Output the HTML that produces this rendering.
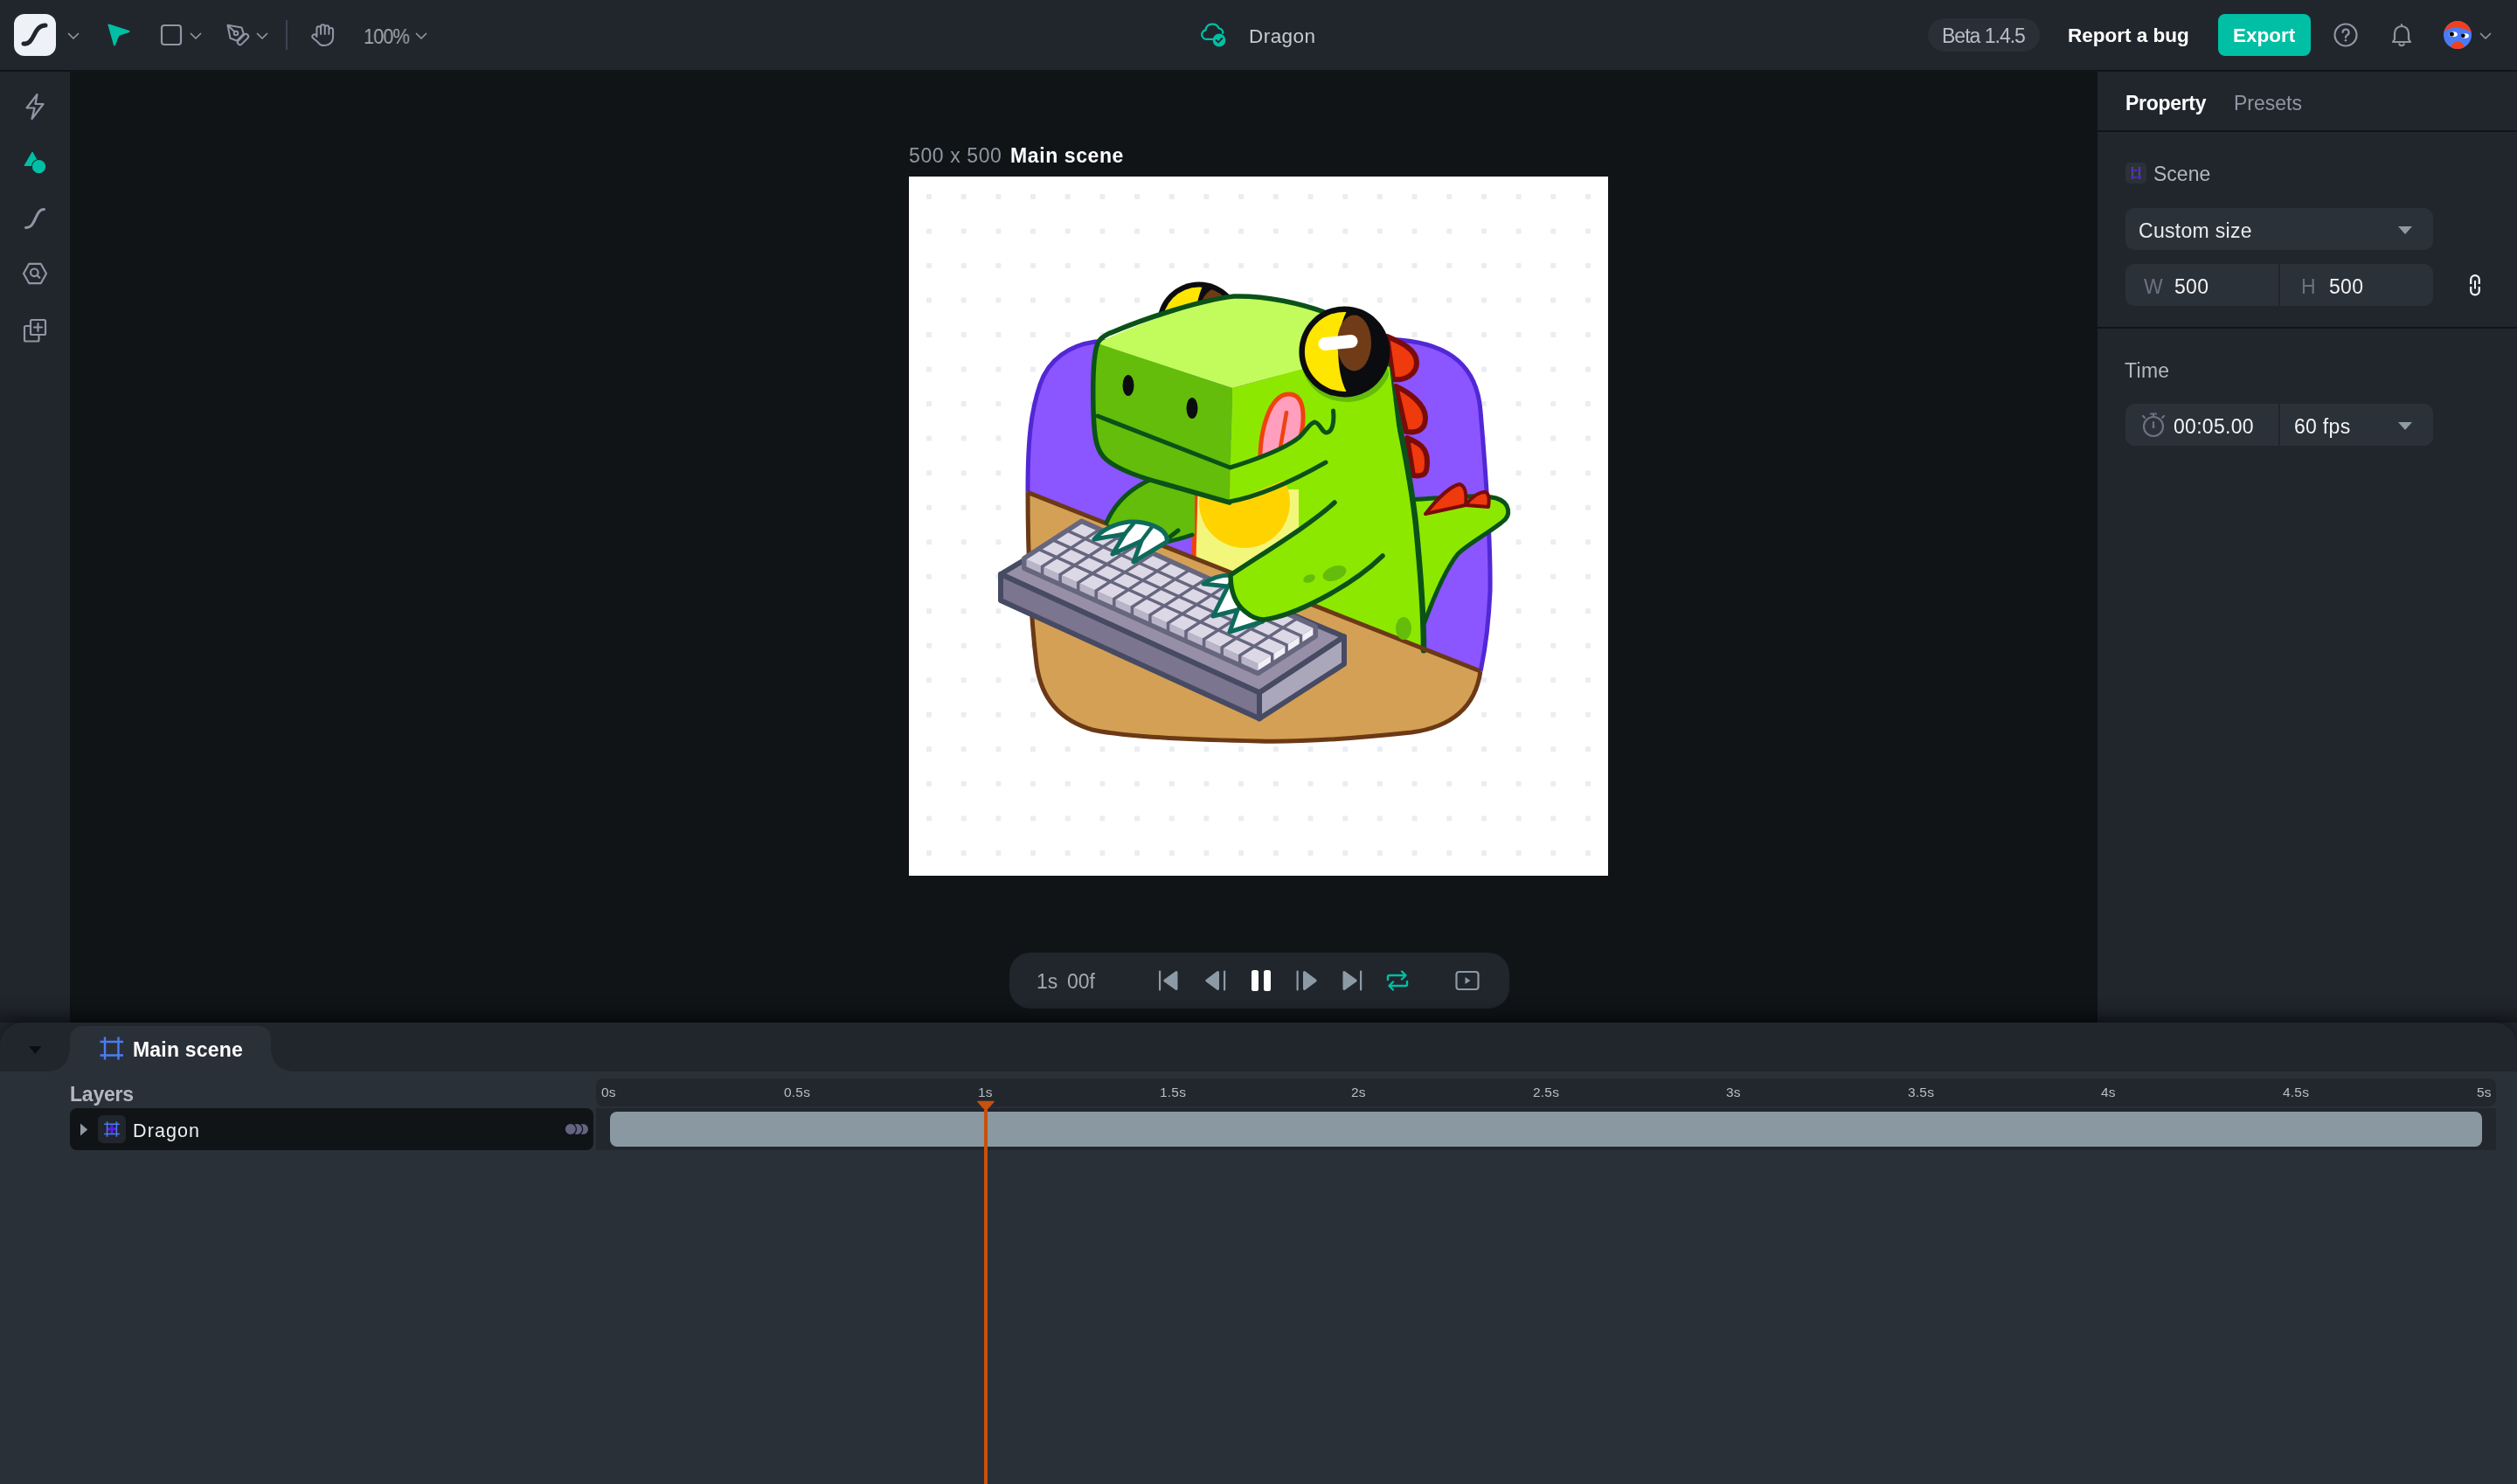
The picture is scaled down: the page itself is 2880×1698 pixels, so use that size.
<!DOCTYPE html>
<html><head><meta charset="utf-8">
<style>
*{margin:0;padding:0;box-sizing:border-box}
html,body{width:2880px;height:1698px;overflow:hidden;background:#111417;font-family:"Liberation Sans",sans-serif}
.a{position:absolute}
.t{position:absolute;white-space:nowrap;line-height:1;will-change:transform}
svg{position:absolute;overflow:visible}
</style></head><body>
<div class="a" style="left:0px;top:0px;width:2880px;height:80px;background:#21262d;border-radius:0px;"></div>
<div class="a" style="left:16px;top:16px;width:48px;height:48px;background:#eef1f5;border-radius:12px;"></div>
<svg style="left:16px;top:16px" width="48" height="48" viewBox="0 0 48 48"><path d="M11 34 C17 35 20 30 23 24 C26 18 29 13 36 13" fill="none" stroke="#21262d" stroke-width="5" stroke-linecap="round"/></svg>
<svg style="left:77px;top:37px" width="14" height="9" viewBox="0 0 14 9"><path d="M1.5 1.5 L7 7 L12.5 1.5" fill="none" stroke="#8f96a3" stroke-width="1.7" stroke-linecap="round" stroke-linejoin="round"/></svg>
<svg style="left:122px;top:26px" width="28" height="28" viewBox="0 0 28 28"><path d="M2.5 2.5 L25.5 10 L13.5 14 L9 25.5 Z" fill="#00bfa5" stroke="#00bfa5" stroke-width="2" stroke-linejoin="round"/></svg>
<svg style="left:182px;top:26px" width="28" height="28" viewBox="0 0 28 28"><rect x="3" y="3" width="22" height="22" rx="3" fill="none" stroke="#8f96a3" stroke-width="2.2"/></svg>
<svg style="left:217px;top:37px" width="14" height="9" viewBox="0 0 14 9"><path d="M1.5 1.5 L7 7 L12.5 1.5" fill="none" stroke="#8f96a3" stroke-width="1.7" stroke-linecap="round" stroke-linejoin="round"/></svg>
<svg style="left:258px;top:26px" width="30" height="30" viewBox="0 0 30 30"><g fill="none" stroke="#8f96a3" stroke-width="2" stroke-linejoin="round" stroke-linecap="round"><path d="M2.5 2.8 L18.5 5.6 L20.8 12.6 L13 20.6 L5.5 17.8 Z"/><circle cx="12" cy="12" r="2.3"/><path d="M3.2 3.5 L10.3 10.3"/><rect x="12.5" y="16.3" width="15" height="5.6" rx="2.8" transform="rotate(-45 20 19.1)"/></g></svg>
<svg style="left:293px;top:37px" width="14" height="9" viewBox="0 0 14 9"><path d="M1.5 1.5 L7 7 L12.5 1.5" fill="none" stroke="#8f96a3" stroke-width="1.7" stroke-linecap="round" stroke-linejoin="round"/></svg>
<div class="a" style="left:327px;top:23px;width:2px;height:34px;background:#3d4350;border-radius:0px;"></div>
<svg style="left:356px;top:27px" width="30" height="30" viewBox="0 0 30 30"><path d="M8 17 V7 a2.5 2.5 0 0 1 5 0 V14 V5 a2.5 2.5 0 0 1 5 0 V14 V6 a2.5 2.5 0 0 1 5 0 V14 V9 a2.5 2.5 0 0 1 5 0 V18 a10 10 0 0 1 -10 10 h-1 a9 9 0 0 1 -7.5 -4 L3 18.5 a2.6 2.6 0 0 1 4 -3.3 L8 17" fill="none" stroke="#8f96a3" stroke-width="2.2" stroke-linejoin="round" stroke-linecap="round" transform="translate(-1,-1) scale(0.93)"/></svg>
<div class="t" style="left:415.7px;top:31.0px;font-size:23px;color:#a3a8b2;letter-spacing:-1.0px;transform:scaleX(0.95);transform-origin:0 0;">100%</div>
<svg style="left:475px;top:37px" width="14" height="9" viewBox="0 0 14 9"><path d="M1.5 1.5 L7 7 L12.5 1.5" fill="none" stroke="#8f96a3" stroke-width="1.7" stroke-linecap="round" stroke-linejoin="round"/></svg>
<svg style="left:1373px;top:26px" width="32" height="30" viewBox="0 0 32 30"><path d="M16 18.8 H7.3 a5.2 5.2 0 0 1 -0.9 -10.3 a8 8 0 0 1 15.2 -2.2 a5 5 0 0 1 4.6 5.6" fill="none" stroke="#00bfa5" stroke-width="2.3" stroke-linecap="round" stroke-linejoin="round"/><circle cx="22" cy="20" r="7.4" fill="#00bfa5"/><path d="M18.6 20 l2.4 2.4 l4.2 -4.4" fill="none" stroke="#21262d" stroke-width="2" stroke-linecap="round" stroke-linejoin="round"/></svg>
<div class="t" style="left:1429.2px;top:30.7px;font-size:22.5px;color:#c8cad2;letter-spacing:0.45px;">Dragon</div>
<div class="a" style="left:2206px;top:21px;width:128px;height:38px;background:#2a2f37;border-radius:19px;"></div>
<div class="t" style="left:2222.2px;top:30.4px;font-size:23px;color:#b9bdc5;letter-spacing:-1px;">Beta 1.4.5</div>
<div class="t" style="left:2365.7px;top:30.4px;font-size:22.5px;color:#ffffff;font-weight:bold;">Report a bug</div>
<div class="a" style="left:2538px;top:16px;width:106px;height:48px;background:#00bfa5;border-radius:8px;"></div>
<div class="t" style="left:2554.7px;top:30.4px;font-size:22.5px;color:#ffffff;font-weight:bold;">Export</div>
<svg style="left:2668px;top:24px" width="32" height="32" viewBox="0 0 32 32"><circle cx="16" cy="16" r="12.5" fill="none" stroke="#8f96a3" stroke-width="2.2"/><path d="M12.6 13 a3.5 3.5 0 1 1 5 3.2 c-1 .5 -1.6 1.2 -1.6 2.3 v.6" fill="none" stroke="#8f96a3" stroke-width="2.2" stroke-linecap="round"/><circle cx="16" cy="22.3" r="1.3" fill="#8f96a3"/></svg>
<svg style="left:2732px;top:24px" width="32" height="32" viewBox="0 0 32 32"><path d="M8 21 V14 a8 8 0 0 1 16 0 V21 l2 3 H6 Z" fill="none" stroke="#8f96a3" stroke-width="2.2" stroke-linejoin="round"/><path d="M13.2 25.5 a2.8 2.8 0 0 0 5.6 0" fill="none" stroke="#8f96a3" stroke-width="2"/><path d="M16 4 v2" stroke="#8f96a3" stroke-width="2.2" stroke-linecap="round"/></svg>
<svg style="left:2796px;top:24px" width="32" height="32" viewBox="0 0 32 32"><defs><clipPath id="av"><circle cx="16" cy="16" r="16"/></clipPath></defs><g clip-path="url(#av)"><rect width="32" height="32" fill="#4a7bf7"/><path d="M-1 -1 H33 V13.5 C28 10, 18 6.5, 10 8 C5 9, 1 11, -1 13.5 Z" fill="#f0401e"/><ellipse cx="16" cy="32" rx="8" ry="8.5" fill="#f0401e"/><ellipse cx="11" cy="15.2" rx="4.8" ry="2.9" fill="#fff"/><ellipse cx="24.5" cy="17" rx="4.4" ry="2.7" fill="#fff"/><circle cx="9.3" cy="15" r="2.6" fill="#0a0a0a"/><circle cx="22.3" cy="16.8" r="2.4" fill="#0a0a0a"/></g></svg>
<svg style="left:2837px;top:37px" width="14" height="9" viewBox="0 0 14 9"><path d="M1.5 1.5 L7 7 L12.5 1.5" fill="none" stroke="#8f96a3" stroke-width="1.7" stroke-linecap="round" stroke-linejoin="round"/></svg>
<div class="a" style="left:0px;top:80px;width:2880px;height:2px;background:#111417;border-radius:0px;"></div>
<div class="a" style="left:0px;top:82px;width:80px;height:1140px;background:#21262d;border-radius:0px;"></div>
<svg style="left:26px;top:106px" width="28" height="32" viewBox="0 0 28 32"><path d="M16.5 2 L4.5 17.5 H13.5 L10.5 30 L23.5 13 H14.5 Z" fill="none" stroke="#8f96a3" stroke-width="2.2" stroke-linejoin="round"/></svg>
<svg style="left:26px;top:172px" width="30" height="30" viewBox="0 0 30 30"><path d="M2 17.5 L11 2 L19.8 17.5 Z" fill="#00bfa5" stroke="#00bfa5" stroke-width="1" stroke-linejoin="round"/><circle cx="18.5" cy="18.7" r="8.6" fill="#21262d"/><circle cx="18.5" cy="18.7" r="7.6" fill="#00bfa5"/></svg>
<svg style="left:26px;top:236px" width="28" height="28" viewBox="0 0 28 28"><path d="M3.5 24.5 C10 25 12 19 14.5 14 C17 8.5 19 3.5 24.5 3.5" fill="none" stroke="#8f96a3" stroke-width="3" stroke-linecap="round"/></svg>
<svg style="left:24px;top:299px" width="32" height="30" viewBox="0 0 32 30"><path d="M9.3 2.8 H22.7 L29 14 L22.7 25.2 H9.3 L3 14 Z" fill="none" stroke="#8f96a3" stroke-width="2.2" stroke-linejoin="round"/><circle cx="15.3" cy="12.8" r="4.3" fill="none" stroke="#8f96a3" stroke-width="2.2"/><path d="M18.5 16 L21.3 18.8" stroke="#8f96a3" stroke-width="2.2" stroke-linecap="round"/></svg>
<svg style="left:25px;top:363px" width="30" height="30" viewBox="0 0 30 30"><g fill="none" stroke="#8f96a3" stroke-width="2.2" stroke-linejoin="round"><path d="M9 10 H4.5 a1.5 1.5 0 0 0 -1.5 1.5 V26 a1.5 1.5 0 0 0 1.5 1.5 H18 a1.5 1.5 0 0 0 1.5 -1.5 V21"/><rect x="10" y="3" width="17" height="17" rx="1.5"/><path d="M18.5 7 V16 M14 11.5 H23" stroke-linecap="round"/></g></svg>
<div class="a" style="left:2400px;top:82px;width:480px;height:1140px;background:#21262d;border-radius:0px;"></div>
<div class="t" style="left:2431.7px;top:106.7px;font-size:23px;color:#ffffff;font-weight:bold;letter-spacing:-0.3px;">Property</div>
<div class="t" style="left:2555.7px;top:107.2px;font-size:23px;color:#9097a2;">Presets</div>
<div class="a" style="left:2400px;top:149px;width:480px;height:2px;background:#111417;border-radius:0px;"></div>
<div class="a" style="left:2432px;top:186px;width:24px;height:24px;background:#2b3139;border-radius:5px;"></div>
<svg style="left:2432px;top:186px" width="24" height="24" viewBox="0 0 24 24"><g fill="#4b4e62"><rect x="7" y="5" width="2" height="14"/><rect x="15" y="5" width="2" height="14"/></g><g fill="#5a1ee8"><rect x="6.5" y="7" width="3" height="3"/><rect x="14.5" y="7" width="3" height="3"/><rect x="6.5" y="15" width="3" height="3"/><rect x="14.5" y="15" width="3" height="3"/><circle cx="13" cy="9" r="0.9"/><circle cx="13" cy="17" r="0.9"/></g><g fill="#6c6f80"><circle cx="11" cy="9" r="0.7"/><circle cx="11" cy="17" r="0.7"/></g></svg>
<div class="t" style="left:2463.7px;top:188.4px;font-size:23px;color:#b3b7bf;">Scene</div>
<div class="a" style="left:2432px;top:238px;width:352px;height:48px;background:#2b3139;border-radius:10px;"></div>
<div class="t" style="left:2447.3px;top:253.1px;font-size:23px;color:#e9ebef;letter-spacing:0.3px;">Custom size</div>
<svg style="left:2744px;top:259px" width="16" height="10" viewBox="0 0 16 10"><path d="M0 0 H16 L8 9 Z" fill="#8e9ba5"/></svg>
<div class="a" style="left:2432px;top:302px;width:352px;height:48px;background:#2b3139;border-radius:10px;"></div>
<div class="a" style="left:2607px;top:302px;width:2px;height:48px;background:#21262d;border-radius:0px;"></div>
<div class="t" style="left:2452.5px;top:317.4px;font-size:23px;color:#6c7180;">W</div>
<div class="t" style="left:2487.7px;top:317.4px;font-size:23px;color:#f2f3f5;letter-spacing:0.3px;">500</div>
<div class="t" style="left:2632.7px;top:317.4px;font-size:23px;color:#6c7180;">H</div>
<div class="t" style="left:2664.7px;top:317.4px;font-size:23px;color:#f2f3f5;letter-spacing:0.3px;">500</div>
<svg style="left:2822px;top:310px" width="20" height="32" viewBox="0 0 20 32"><g fill="none" stroke="#f3f1f7" stroke-width="2.3" stroke-linecap="butt"><path d="M5.2 15 V10 a4.8 4.8 0 0 1 9.6 0 V15"/><path d="M5.2 18 V22.5 a4.8 4.8 0 0 0 9.6 0 V18"/></g><rect x="9" y="11" width="2" height="9.5" fill="#f3f1f7"/></svg>
<div class="a" style="left:2400px;top:374px;width:480px;height:2px;background:#111417;border-radius:0px;"></div>
<div class="t" style="left:2430.7px;top:413.1px;font-size:23px;color:#b3b7bf;letter-spacing:0.3px;">Time</div>
<div class="a" style="left:2432px;top:462px;width:352px;height:48px;background:#2b3139;border-radius:10px;"></div>
<div class="a" style="left:2607px;top:462px;width:2px;height:48px;background:#21262d;border-radius:0px;"></div>
<svg style="left:2449px;top:470px" width="30" height="32" viewBox="0 0 30 32"><g fill="none" stroke="#6c7180" stroke-width="2.2" stroke-linecap="round"><circle cx="15" cy="18" r="11"/><path d="M12 3.5 H18 M15 3.5 V7 M25 8 L27 6 M5 8 L3 6"/><path d="M15 13 V18"/></g><circle cx="15" cy="18.5" r="1.6" fill="#6c7180"/></svg>
<div class="t" style="left:2486.7px;top:477.1px;font-size:23px;color:#f2f3f5;letter-spacing:0.3px;">00:05.00</div>
<div class="t" style="left:2625.3px;top:477.1px;font-size:23px;color:#f2f3f5;letter-spacing:0.3px;">60 fps</div>
<svg style="left:2744px;top:483px" width="16" height="10" viewBox="0 0 16 10"><path d="M0 0 H16 L8 9 Z" fill="#8e9ba5"/></svg>
<div class="t" style="left:1039.7px;top:166.9px;font-size:23px;color:#8f96a0;letter-spacing:0.6px;">500 x 500</div>
<div class="t" style="left:1156.0px;top:166.9px;font-size:23px;color:#ffffff;font-weight:bold;letter-spacing:0.6px;">Main scene</div>
<div class="a" style="left:1040px;top:202px;width:800px;height:800px;background:#ffffff;border-radius:0px;"></div>
<svg style="left:1040px;top:202px" width="800" height="800" viewBox="0 0 800 800"><g fill="#e9eef3"><rect x="20.0" y="20.0" width="6" height="6" rx="1.2"/><rect x="20.0" y="59.5" width="6" height="6" rx="1.2"/><rect x="20.0" y="99.0" width="6" height="6" rx="1.2"/><rect x="20.0" y="138.6" width="6" height="6" rx="1.2"/><rect x="20.0" y="178.1" width="6" height="6" rx="1.2"/><rect x="20.0" y="217.6" width="6" height="6" rx="1.2"/><rect x="20.0" y="257.1" width="6" height="6" rx="1.2"/><rect x="20.0" y="296.6" width="6" height="6" rx="1.2"/><rect x="20.0" y="336.2" width="6" height="6" rx="1.2"/><rect x="20.0" y="375.7" width="6" height="6" rx="1.2"/><rect x="20.0" y="415.2" width="6" height="6" rx="1.2"/><rect x="20.0" y="454.7" width="6" height="6" rx="1.2"/><rect x="20.0" y="494.2" width="6" height="6" rx="1.2"/><rect x="20.0" y="533.8" width="6" height="6" rx="1.2"/><rect x="20.0" y="573.3" width="6" height="6" rx="1.2"/><rect x="20.0" y="612.8" width="6" height="6" rx="1.2"/><rect x="20.0" y="652.3" width="6" height="6" rx="1.2"/><rect x="20.0" y="691.8" width="6" height="6" rx="1.2"/><rect x="20.0" y="731.4" width="6" height="6" rx="1.2"/><rect x="20.0" y="770.9" width="6" height="6" rx="1.2"/><rect x="59.7" y="20.0" width="6" height="6" rx="1.2"/><rect x="59.7" y="59.5" width="6" height="6" rx="1.2"/><rect x="59.7" y="99.0" width="6" height="6" rx="1.2"/><rect x="59.7" y="138.6" width="6" height="6" rx="1.2"/><rect x="59.7" y="178.1" width="6" height="6" rx="1.2"/><rect x="59.7" y="217.6" width="6" height="6" rx="1.2"/><rect x="59.7" y="257.1" width="6" height="6" rx="1.2"/><rect x="59.7" y="296.6" width="6" height="6" rx="1.2"/><rect x="59.7" y="336.2" width="6" height="6" rx="1.2"/><rect x="59.7" y="375.7" width="6" height="6" rx="1.2"/><rect x="59.7" y="415.2" width="6" height="6" rx="1.2"/><rect x="59.7" y="454.7" width="6" height="6" rx="1.2"/><rect x="59.7" y="494.2" width="6" height="6" rx="1.2"/><rect x="59.7" y="533.8" width="6" height="6" rx="1.2"/><rect x="59.7" y="573.3" width="6" height="6" rx="1.2"/><rect x="59.7" y="612.8" width="6" height="6" rx="1.2"/><rect x="59.7" y="652.3" width="6" height="6" rx="1.2"/><rect x="59.7" y="691.8" width="6" height="6" rx="1.2"/><rect x="59.7" y="731.4" width="6" height="6" rx="1.2"/><rect x="59.7" y="770.9" width="6" height="6" rx="1.2"/><rect x="99.4" y="20.0" width="6" height="6" rx="1.2"/><rect x="99.4" y="59.5" width="6" height="6" rx="1.2"/><rect x="99.4" y="99.0" width="6" height="6" rx="1.2"/><rect x="99.4" y="138.6" width="6" height="6" rx="1.2"/><rect x="99.4" y="178.1" width="6" height="6" rx="1.2"/><rect x="99.4" y="217.6" width="6" height="6" rx="1.2"/><rect x="99.4" y="257.1" width="6" height="6" rx="1.2"/><rect x="99.4" y="296.6" width="6" height="6" rx="1.2"/><rect x="99.4" y="336.2" width="6" height="6" rx="1.2"/><rect x="99.4" y="375.7" width="6" height="6" rx="1.2"/><rect x="99.4" y="415.2" width="6" height="6" rx="1.2"/><rect x="99.4" y="454.7" width="6" height="6" rx="1.2"/><rect x="99.4" y="494.2" width="6" height="6" rx="1.2"/><rect x="99.4" y="533.8" width="6" height="6" rx="1.2"/><rect x="99.4" y="573.3" width="6" height="6" rx="1.2"/><rect x="99.4" y="612.8" width="6" height="6" rx="1.2"/><rect x="99.4" y="652.3" width="6" height="6" rx="1.2"/><rect x="99.4" y="691.8" width="6" height="6" rx="1.2"/><rect x="99.4" y="731.4" width="6" height="6" rx="1.2"/><rect x="99.4" y="770.9" width="6" height="6" rx="1.2"/><rect x="139.0" y="20.0" width="6" height="6" rx="1.2"/><rect x="139.0" y="59.5" width="6" height="6" rx="1.2"/><rect x="139.0" y="99.0" width="6" height="6" rx="1.2"/><rect x="139.0" y="138.6" width="6" height="6" rx="1.2"/><rect x="139.0" y="178.1" width="6" height="6" rx="1.2"/><rect x="139.0" y="217.6" width="6" height="6" rx="1.2"/><rect x="139.0" y="257.1" width="6" height="6" rx="1.2"/><rect x="139.0" y="296.6" width="6" height="6" rx="1.2"/><rect x="139.0" y="336.2" width="6" height="6" rx="1.2"/><rect x="139.0" y="375.7" width="6" height="6" rx="1.2"/><rect x="139.0" y="415.2" width="6" height="6" rx="1.2"/><rect x="139.0" y="454.7" width="6" height="6" rx="1.2"/><rect x="139.0" y="494.2" width="6" height="6" rx="1.2"/><rect x="139.0" y="533.8" width="6" height="6" rx="1.2"/><rect x="139.0" y="573.3" width="6" height="6" rx="1.2"/><rect x="139.0" y="612.8" width="6" height="6" rx="1.2"/><rect x="139.0" y="652.3" width="6" height="6" rx="1.2"/><rect x="139.0" y="691.8" width="6" height="6" rx="1.2"/><rect x="139.0" y="731.4" width="6" height="6" rx="1.2"/><rect x="139.0" y="770.9" width="6" height="6" rx="1.2"/><rect x="178.7" y="20.0" width="6" height="6" rx="1.2"/><rect x="178.7" y="59.5" width="6" height="6" rx="1.2"/><rect x="178.7" y="99.0" width="6" height="6" rx="1.2"/><rect x="178.7" y="138.6" width="6" height="6" rx="1.2"/><rect x="178.7" y="178.1" width="6" height="6" rx="1.2"/><rect x="178.7" y="217.6" width="6" height="6" rx="1.2"/><rect x="178.7" y="257.1" width="6" height="6" rx="1.2"/><rect x="178.7" y="296.6" width="6" height="6" rx="1.2"/><rect x="178.7" y="336.2" width="6" height="6" rx="1.2"/><rect x="178.7" y="375.7" width="6" height="6" rx="1.2"/><rect x="178.7" y="415.2" width="6" height="6" rx="1.2"/><rect x="178.7" y="454.7" width="6" height="6" rx="1.2"/><rect x="178.7" y="494.2" width="6" height="6" rx="1.2"/><rect x="178.7" y="533.8" width="6" height="6" rx="1.2"/><rect x="178.7" y="573.3" width="6" height="6" rx="1.2"/><rect x="178.7" y="612.8" width="6" height="6" rx="1.2"/><rect x="178.7" y="652.3" width="6" height="6" rx="1.2"/><rect x="178.7" y="691.8" width="6" height="6" rx="1.2"/><rect x="178.7" y="731.4" width="6" height="6" rx="1.2"/><rect x="178.7" y="770.9" width="6" height="6" rx="1.2"/><rect x="218.4" y="20.0" width="6" height="6" rx="1.2"/><rect x="218.4" y="59.5" width="6" height="6" rx="1.2"/><rect x="218.4" y="99.0" width="6" height="6" rx="1.2"/><rect x="218.4" y="138.6" width="6" height="6" rx="1.2"/><rect x="218.4" y="178.1" width="6" height="6" rx="1.2"/><rect x="218.4" y="217.6" width="6" height="6" rx="1.2"/><rect x="218.4" y="257.1" width="6" height="6" rx="1.2"/><rect x="218.4" y="296.6" width="6" height="6" rx="1.2"/><rect x="218.4" y="336.2" width="6" height="6" rx="1.2"/><rect x="218.4" y="375.7" width="6" height="6" rx="1.2"/><rect x="218.4" y="415.2" width="6" height="6" rx="1.2"/><rect x="218.4" y="454.7" width="6" height="6" rx="1.2"/><rect x="218.4" y="494.2" width="6" height="6" rx="1.2"/><rect x="218.4" y="533.8" width="6" height="6" rx="1.2"/><rect x="218.4" y="573.3" width="6" height="6" rx="1.2"/><rect x="218.4" y="612.8" width="6" height="6" rx="1.2"/><rect x="218.4" y="652.3" width="6" height="6" rx="1.2"/><rect x="218.4" y="691.8" width="6" height="6" rx="1.2"/><rect x="218.4" y="731.4" width="6" height="6" rx="1.2"/><rect x="218.4" y="770.9" width="6" height="6" rx="1.2"/><rect x="258.1" y="20.0" width="6" height="6" rx="1.2"/><rect x="258.1" y="59.5" width="6" height="6" rx="1.2"/><rect x="258.1" y="99.0" width="6" height="6" rx="1.2"/><rect x="258.1" y="138.6" width="6" height="6" rx="1.2"/><rect x="258.1" y="178.1" width="6" height="6" rx="1.2"/><rect x="258.1" y="217.6" width="6" height="6" rx="1.2"/><rect x="258.1" y="257.1" width="6" height="6" rx="1.2"/><rect x="258.1" y="296.6" width="6" height="6" rx="1.2"/><rect x="258.1" y="336.2" width="6" height="6" rx="1.2"/><rect x="258.1" y="375.7" width="6" height="6" rx="1.2"/><rect x="258.1" y="415.2" width="6" height="6" rx="1.2"/><rect x="258.1" y="454.7" width="6" height="6" rx="1.2"/><rect x="258.1" y="494.2" width="6" height="6" rx="1.2"/><rect x="258.1" y="533.8" width="6" height="6" rx="1.2"/><rect x="258.1" y="573.3" width="6" height="6" rx="1.2"/><rect x="258.1" y="612.8" width="6" height="6" rx="1.2"/><rect x="258.1" y="652.3" width="6" height="6" rx="1.2"/><rect x="258.1" y="691.8" width="6" height="6" rx="1.2"/><rect x="258.1" y="731.4" width="6" height="6" rx="1.2"/><rect x="258.1" y="770.9" width="6" height="6" rx="1.2"/><rect x="297.8" y="20.0" width="6" height="6" rx="1.2"/><rect x="297.8" y="59.5" width="6" height="6" rx="1.2"/><rect x="297.8" y="99.0" width="6" height="6" rx="1.2"/><rect x="297.8" y="138.6" width="6" height="6" rx="1.2"/><rect x="297.8" y="178.1" width="6" height="6" rx="1.2"/><rect x="297.8" y="217.6" width="6" height="6" rx="1.2"/><rect x="297.8" y="257.1" width="6" height="6" rx="1.2"/><rect x="297.8" y="296.6" width="6" height="6" rx="1.2"/><rect x="297.8" y="336.2" width="6" height="6" rx="1.2"/><rect x="297.8" y="375.7" width="6" height="6" rx="1.2"/><rect x="297.8" y="415.2" width="6" height="6" rx="1.2"/><rect x="297.8" y="454.7" width="6" height="6" rx="1.2"/><rect x="297.8" y="494.2" width="6" height="6" rx="1.2"/><rect x="297.8" y="533.8" width="6" height="6" rx="1.2"/><rect x="297.8" y="573.3" width="6" height="6" rx="1.2"/><rect x="297.8" y="612.8" width="6" height="6" rx="1.2"/><rect x="297.8" y="652.3" width="6" height="6" rx="1.2"/><rect x="297.8" y="691.8" width="6" height="6" rx="1.2"/><rect x="297.8" y="731.4" width="6" height="6" rx="1.2"/><rect x="297.8" y="770.9" width="6" height="6" rx="1.2"/><rect x="337.4" y="20.0" width="6" height="6" rx="1.2"/><rect x="337.4" y="59.5" width="6" height="6" rx="1.2"/><rect x="337.4" y="99.0" width="6" height="6" rx="1.2"/><rect x="337.4" y="138.6" width="6" height="6" rx="1.2"/><rect x="337.4" y="178.1" width="6" height="6" rx="1.2"/><rect x="337.4" y="217.6" width="6" height="6" rx="1.2"/><rect x="337.4" y="257.1" width="6" height="6" rx="1.2"/><rect x="337.4" y="296.6" width="6" height="6" rx="1.2"/><rect x="337.4" y="336.2" width="6" height="6" rx="1.2"/><rect x="337.4" y="375.7" width="6" height="6" rx="1.2"/><rect x="337.4" y="415.2" width="6" height="6" rx="1.2"/><rect x="337.4" y="454.7" width="6" height="6" rx="1.2"/><rect x="337.4" y="494.2" width="6" height="6" rx="1.2"/><rect x="337.4" y="533.8" width="6" height="6" rx="1.2"/><rect x="337.4" y="573.3" width="6" height="6" rx="1.2"/><rect x="337.4" y="612.8" width="6" height="6" rx="1.2"/><rect x="337.4" y="652.3" width="6" height="6" rx="1.2"/><rect x="337.4" y="691.8" width="6" height="6" rx="1.2"/><rect x="337.4" y="731.4" width="6" height="6" rx="1.2"/><rect x="337.4" y="770.9" width="6" height="6" rx="1.2"/><rect x="377.1" y="20.0" width="6" height="6" rx="1.2"/><rect x="377.1" y="59.5" width="6" height="6" rx="1.2"/><rect x="377.1" y="99.0" width="6" height="6" rx="1.2"/><rect x="377.1" y="138.6" width="6" height="6" rx="1.2"/><rect x="377.1" y="178.1" width="6" height="6" rx="1.2"/><rect x="377.1" y="217.6" width="6" height="6" rx="1.2"/><rect x="377.1" y="257.1" width="6" height="6" rx="1.2"/><rect x="377.1" y="296.6" width="6" height="6" rx="1.2"/><rect x="377.1" y="336.2" width="6" height="6" rx="1.2"/><rect x="377.1" y="375.7" width="6" height="6" rx="1.2"/><rect x="377.1" y="415.2" width="6" height="6" rx="1.2"/><rect x="377.1" y="454.7" width="6" height="6" rx="1.2"/><rect x="377.1" y="494.2" width="6" height="6" rx="1.2"/><rect x="377.1" y="533.8" width="6" height="6" rx="1.2"/><rect x="377.1" y="573.3" width="6" height="6" rx="1.2"/><rect x="377.1" y="612.8" width="6" height="6" rx="1.2"/><rect x="377.1" y="652.3" width="6" height="6" rx="1.2"/><rect x="377.1" y="691.8" width="6" height="6" rx="1.2"/><rect x="377.1" y="731.4" width="6" height="6" rx="1.2"/><rect x="377.1" y="770.9" width="6" height="6" rx="1.2"/><rect x="416.8" y="20.0" width="6" height="6" rx="1.2"/><rect x="416.8" y="59.5" width="6" height="6" rx="1.2"/><rect x="416.8" y="99.0" width="6" height="6" rx="1.2"/><rect x="416.8" y="138.6" width="6" height="6" rx="1.2"/><rect x="416.8" y="178.1" width="6" height="6" rx="1.2"/><rect x="416.8" y="217.6" width="6" height="6" rx="1.2"/><rect x="416.8" y="257.1" width="6" height="6" rx="1.2"/><rect x="416.8" y="296.6" width="6" height="6" rx="1.2"/><rect x="416.8" y="336.2" width="6" height="6" rx="1.2"/><rect x="416.8" y="375.7" width="6" height="6" rx="1.2"/><rect x="416.8" y="415.2" width="6" height="6" rx="1.2"/><rect x="416.8" y="454.7" width="6" height="6" rx="1.2"/><rect x="416.8" y="494.2" width="6" height="6" rx="1.2"/><rect x="416.8" y="533.8" width="6" height="6" rx="1.2"/><rect x="416.8" y="573.3" width="6" height="6" rx="1.2"/><rect x="416.8" y="612.8" width="6" height="6" rx="1.2"/><rect x="416.8" y="652.3" width="6" height="6" rx="1.2"/><rect x="416.8" y="691.8" width="6" height="6" rx="1.2"/><rect x="416.8" y="731.4" width="6" height="6" rx="1.2"/><rect x="416.8" y="770.9" width="6" height="6" rx="1.2"/><rect x="456.5" y="20.0" width="6" height="6" rx="1.2"/><rect x="456.5" y="59.5" width="6" height="6" rx="1.2"/><rect x="456.5" y="99.0" width="6" height="6" rx="1.2"/><rect x="456.5" y="138.6" width="6" height="6" rx="1.2"/><rect x="456.5" y="178.1" width="6" height="6" rx="1.2"/><rect x="456.5" y="217.6" width="6" height="6" rx="1.2"/><rect x="456.5" y="257.1" width="6" height="6" rx="1.2"/><rect x="456.5" y="296.6" width="6" height="6" rx="1.2"/><rect x="456.5" y="336.2" width="6" height="6" rx="1.2"/><rect x="456.5" y="375.7" width="6" height="6" rx="1.2"/><rect x="456.5" y="415.2" width="6" height="6" rx="1.2"/><rect x="456.5" y="454.7" width="6" height="6" rx="1.2"/><rect x="456.5" y="494.2" width="6" height="6" rx="1.2"/><rect x="456.5" y="533.8" width="6" height="6" rx="1.2"/><rect x="456.5" y="573.3" width="6" height="6" rx="1.2"/><rect x="456.5" y="612.8" width="6" height="6" rx="1.2"/><rect x="456.5" y="652.3" width="6" height="6" rx="1.2"/><rect x="456.5" y="691.8" width="6" height="6" rx="1.2"/><rect x="456.5" y="731.4" width="6" height="6" rx="1.2"/><rect x="456.5" y="770.9" width="6" height="6" rx="1.2"/><rect x="496.2" y="20.0" width="6" height="6" rx="1.2"/><rect x="496.2" y="59.5" width="6" height="6" rx="1.2"/><rect x="496.2" y="99.0" width="6" height="6" rx="1.2"/><rect x="496.2" y="138.6" width="6" height="6" rx="1.2"/><rect x="496.2" y="178.1" width="6" height="6" rx="1.2"/><rect x="496.2" y="217.6" width="6" height="6" rx="1.2"/><rect x="496.2" y="257.1" width="6" height="6" rx="1.2"/><rect x="496.2" y="296.6" width="6" height="6" rx="1.2"/><rect x="496.2" y="336.2" width="6" height="6" rx="1.2"/><rect x="496.2" y="375.7" width="6" height="6" rx="1.2"/><rect x="496.2" y="415.2" width="6" height="6" rx="1.2"/><rect x="496.2" y="454.7" width="6" height="6" rx="1.2"/><rect x="496.2" y="494.2" width="6" height="6" rx="1.2"/><rect x="496.2" y="533.8" width="6" height="6" rx="1.2"/><rect x="496.2" y="573.3" width="6" height="6" rx="1.2"/><rect x="496.2" y="612.8" width="6" height="6" rx="1.2"/><rect x="496.2" y="652.3" width="6" height="6" rx="1.2"/><rect x="496.2" y="691.8" width="6" height="6" rx="1.2"/><rect x="496.2" y="731.4" width="6" height="6" rx="1.2"/><rect x="496.2" y="770.9" width="6" height="6" rx="1.2"/><rect x="535.8" y="20.0" width="6" height="6" rx="1.2"/><rect x="535.8" y="59.5" width="6" height="6" rx="1.2"/><rect x="535.8" y="99.0" width="6" height="6" rx="1.2"/><rect x="535.8" y="138.6" width="6" height="6" rx="1.2"/><rect x="535.8" y="178.1" width="6" height="6" rx="1.2"/><rect x="535.8" y="217.6" width="6" height="6" rx="1.2"/><rect x="535.8" y="257.1" width="6" height="6" rx="1.2"/><rect x="535.8" y="296.6" width="6" height="6" rx="1.2"/><rect x="535.8" y="336.2" width="6" height="6" rx="1.2"/><rect x="535.8" y="375.7" width="6" height="6" rx="1.2"/><rect x="535.8" y="415.2" width="6" height="6" rx="1.2"/><rect x="535.8" y="454.7" width="6" height="6" rx="1.2"/><rect x="535.8" y="494.2" width="6" height="6" rx="1.2"/><rect x="535.8" y="533.8" width="6" height="6" rx="1.2"/><rect x="535.8" y="573.3" width="6" height="6" rx="1.2"/><rect x="535.8" y="612.8" width="6" height="6" rx="1.2"/><rect x="535.8" y="652.3" width="6" height="6" rx="1.2"/><rect x="535.8" y="691.8" width="6" height="6" rx="1.2"/><rect x="535.8" y="731.4" width="6" height="6" rx="1.2"/><rect x="535.8" y="770.9" width="6" height="6" rx="1.2"/><rect x="575.5" y="20.0" width="6" height="6" rx="1.2"/><rect x="575.5" y="59.5" width="6" height="6" rx="1.2"/><rect x="575.5" y="99.0" width="6" height="6" rx="1.2"/><rect x="575.5" y="138.6" width="6" height="6" rx="1.2"/><rect x="575.5" y="178.1" width="6" height="6" rx="1.2"/><rect x="575.5" y="217.6" width="6" height="6" rx="1.2"/><rect x="575.5" y="257.1" width="6" height="6" rx="1.2"/><rect x="575.5" y="296.6" width="6" height="6" rx="1.2"/><rect x="575.5" y="336.2" width="6" height="6" rx="1.2"/><rect x="575.5" y="375.7" width="6" height="6" rx="1.2"/><rect x="575.5" y="415.2" width="6" height="6" rx="1.2"/><rect x="575.5" y="454.7" width="6" height="6" rx="1.2"/><rect x="575.5" y="494.2" width="6" height="6" rx="1.2"/><rect x="575.5" y="533.8" width="6" height="6" rx="1.2"/><rect x="575.5" y="573.3" width="6" height="6" rx="1.2"/><rect x="575.5" y="612.8" width="6" height="6" rx="1.2"/><rect x="575.5" y="652.3" width="6" height="6" rx="1.2"/><rect x="575.5" y="691.8" width="6" height="6" rx="1.2"/><rect x="575.5" y="731.4" width="6" height="6" rx="1.2"/><rect x="575.5" y="770.9" width="6" height="6" rx="1.2"/><rect x="615.2" y="20.0" width="6" height="6" rx="1.2"/><rect x="615.2" y="59.5" width="6" height="6" rx="1.2"/><rect x="615.2" y="99.0" width="6" height="6" rx="1.2"/><rect x="615.2" y="138.6" width="6" height="6" rx="1.2"/><rect x="615.2" y="178.1" width="6" height="6" rx="1.2"/><rect x="615.2" y="217.6" width="6" height="6" rx="1.2"/><rect x="615.2" y="257.1" width="6" height="6" rx="1.2"/><rect x="615.2" y="296.6" width="6" height="6" rx="1.2"/><rect x="615.2" y="336.2" width="6" height="6" rx="1.2"/><rect x="615.2" y="375.7" width="6" height="6" rx="1.2"/><rect x="615.2" y="415.2" width="6" height="6" rx="1.2"/><rect x="615.2" y="454.7" width="6" height="6" rx="1.2"/><rect x="615.2" y="494.2" width="6" height="6" rx="1.2"/><rect x="615.2" y="533.8" width="6" height="6" rx="1.2"/><rect x="615.2" y="573.3" width="6" height="6" rx="1.2"/><rect x="615.2" y="612.8" width="6" height="6" rx="1.2"/><rect x="615.2" y="652.3" width="6" height="6" rx="1.2"/><rect x="615.2" y="691.8" width="6" height="6" rx="1.2"/><rect x="615.2" y="731.4" width="6" height="6" rx="1.2"/><rect x="615.2" y="770.9" width="6" height="6" rx="1.2"/><rect x="654.9" y="20.0" width="6" height="6" rx="1.2"/><rect x="654.9" y="59.5" width="6" height="6" rx="1.2"/><rect x="654.9" y="99.0" width="6" height="6" rx="1.2"/><rect x="654.9" y="138.6" width="6" height="6" rx="1.2"/><rect x="654.9" y="178.1" width="6" height="6" rx="1.2"/><rect x="654.9" y="217.6" width="6" height="6" rx="1.2"/><rect x="654.9" y="257.1" width="6" height="6" rx="1.2"/><rect x="654.9" y="296.6" width="6" height="6" rx="1.2"/><rect x="654.9" y="336.2" width="6" height="6" rx="1.2"/><rect x="654.9" y="375.7" width="6" height="6" rx="1.2"/><rect x="654.9" y="415.2" width="6" height="6" rx="1.2"/><rect x="654.9" y="454.7" width="6" height="6" rx="1.2"/><rect x="654.9" y="494.2" width="6" height="6" rx="1.2"/><rect x="654.9" y="533.8" width="6" height="6" rx="1.2"/><rect x="654.9" y="573.3" width="6" height="6" rx="1.2"/><rect x="654.9" y="612.8" width="6" height="6" rx="1.2"/><rect x="654.9" y="652.3" width="6" height="6" rx="1.2"/><rect x="654.9" y="691.8" width="6" height="6" rx="1.2"/><rect x="654.9" y="731.4" width="6" height="6" rx="1.2"/><rect x="654.9" y="770.9" width="6" height="6" rx="1.2"/><rect x="694.6" y="20.0" width="6" height="6" rx="1.2"/><rect x="694.6" y="59.5" width="6" height="6" rx="1.2"/><rect x="694.6" y="99.0" width="6" height="6" rx="1.2"/><rect x="694.6" y="138.6" width="6" height="6" rx="1.2"/><rect x="694.6" y="178.1" width="6" height="6" rx="1.2"/><rect x="694.6" y="217.6" width="6" height="6" rx="1.2"/><rect x="694.6" y="257.1" width="6" height="6" rx="1.2"/><rect x="694.6" y="296.6" width="6" height="6" rx="1.2"/><rect x="694.6" y="336.2" width="6" height="6" rx="1.2"/><rect x="694.6" y="375.7" width="6" height="6" rx="1.2"/><rect x="694.6" y="415.2" width="6" height="6" rx="1.2"/><rect x="694.6" y="454.7" width="6" height="6" rx="1.2"/><rect x="694.6" y="494.2" width="6" height="6" rx="1.2"/><rect x="694.6" y="533.8" width="6" height="6" rx="1.2"/><rect x="694.6" y="573.3" width="6" height="6" rx="1.2"/><rect x="694.6" y="612.8" width="6" height="6" rx="1.2"/><rect x="694.6" y="652.3" width="6" height="6" rx="1.2"/><rect x="694.6" y="691.8" width="6" height="6" rx="1.2"/><rect x="694.6" y="731.4" width="6" height="6" rx="1.2"/><rect x="694.6" y="770.9" width="6" height="6" rx="1.2"/><rect x="734.2" y="20.0" width="6" height="6" rx="1.2"/><rect x="734.2" y="59.5" width="6" height="6" rx="1.2"/><rect x="734.2" y="99.0" width="6" height="6" rx="1.2"/><rect x="734.2" y="138.6" width="6" height="6" rx="1.2"/><rect x="734.2" y="178.1" width="6" height="6" rx="1.2"/><rect x="734.2" y="217.6" width="6" height="6" rx="1.2"/><rect x="734.2" y="257.1" width="6" height="6" rx="1.2"/><rect x="734.2" y="296.6" width="6" height="6" rx="1.2"/><rect x="734.2" y="336.2" width="6" height="6" rx="1.2"/><rect x="734.2" y="375.7" width="6" height="6" rx="1.2"/><rect x="734.2" y="415.2" width="6" height="6" rx="1.2"/><rect x="734.2" y="454.7" width="6" height="6" rx="1.2"/><rect x="734.2" y="494.2" width="6" height="6" rx="1.2"/><rect x="734.2" y="533.8" width="6" height="6" rx="1.2"/><rect x="734.2" y="573.3" width="6" height="6" rx="1.2"/><rect x="734.2" y="612.8" width="6" height="6" rx="1.2"/><rect x="734.2" y="652.3" width="6" height="6" rx="1.2"/><rect x="734.2" y="691.8" width="6" height="6" rx="1.2"/><rect x="734.2" y="731.4" width="6" height="6" rx="1.2"/><rect x="734.2" y="770.9" width="6" height="6" rx="1.2"/><rect x="773.9" y="20.0" width="6" height="6" rx="1.2"/><rect x="773.9" y="59.5" width="6" height="6" rx="1.2"/><rect x="773.9" y="99.0" width="6" height="6" rx="1.2"/><rect x="773.9" y="138.6" width="6" height="6" rx="1.2"/><rect x="773.9" y="178.1" width="6" height="6" rx="1.2"/><rect x="773.9" y="217.6" width="6" height="6" rx="1.2"/><rect x="773.9" y="257.1" width="6" height="6" rx="1.2"/><rect x="773.9" y="296.6" width="6" height="6" rx="1.2"/><rect x="773.9" y="336.2" width="6" height="6" rx="1.2"/><rect x="773.9" y="375.7" width="6" height="6" rx="1.2"/><rect x="773.9" y="415.2" width="6" height="6" rx="1.2"/><rect x="773.9" y="454.7" width="6" height="6" rx="1.2"/><rect x="773.9" y="494.2" width="6" height="6" rx="1.2"/><rect x="773.9" y="533.8" width="6" height="6" rx="1.2"/><rect x="773.9" y="573.3" width="6" height="6" rx="1.2"/><rect x="773.9" y="612.8" width="6" height="6" rx="1.2"/><rect x="773.9" y="652.3" width="6" height="6" rx="1.2"/><rect x="773.9" y="691.8" width="6" height="6" rx="1.2"/><rect x="773.9" y="731.4" width="6" height="6" rx="1.2"/><rect x="773.9" y="770.9" width="6" height="6" rx="1.2"/></g></svg>
<svg style="left:0;top:0" width="2880" height="1698" viewBox="0 0 2880 1698"><defs><clipPath id="cTop"><path d="M1100 300 H1800 V809.9 L1100 533.4 Z"/></clipPath><clipPath id="cBot"><path d="M1100 533.4 L1800 809.9 V1000 H1100 Z"/></clipPath><clipPath id="cEye"><circle cx="1538.4" cy="402.4" r="45.5"/></clipPath><clipPath id="cEye2"><circle cx="1372" cy="370.5" r="42"/></clipPath><clipPath id="cShadow"><path d="M1400 300 H1584 L1587 418 L1600 480 L1400 480 Z"/></clipPath></defs><path d="M 1253 391 C 1400 386, 1540 384, 1602 389 C 1660 394, 1690 420, 1694 470 C 1700 540, 1706 620, 1705 677 C 1703 720, 1698 750, 1694 768 C 1688 810, 1660 832, 1615 838 C 1540 846, 1480 849, 1440 848 C 1340 846, 1280 842, 1250 835 C 1205 822, 1190 790, 1186 760 C 1180 710, 1176 640, 1176 560 C 1176 500, 1180 470, 1190 440 C 1200 410, 1225 395, 1253 391 Z" fill="#8b55ff" stroke="#5127d6" stroke-width="5" clip-path="url(#cTop)"/><path d="M 1253 391 C 1400 386, 1540 384, 1602 389 C 1660 394, 1690 420, 1694 470 C 1700 540, 1706 620, 1705 677 C 1703 720, 1698 750, 1694 768 C 1688 810, 1660 832, 1615 838 C 1540 846, 1480 849, 1440 848 C 1340 846, 1280 842, 1250 835 C 1205 822, 1190 790, 1186 760 C 1180 710, 1176 640, 1176 560 C 1176 500, 1180 470, 1190 440 C 1200 410, 1225 395, 1253 391 Z" fill="#d4a055" stroke="#6b3915" stroke-width="5" clip-path="url(#cBot)"/><path d="M1610 572 C1650 570, 1690 565, 1712 570 C1728 575, 1730 590, 1718 598 C1700 612, 1680 622, 1668 634 C1655 650, 1640 685, 1630 712 L1600 700 Z" fill="#8de800" stroke="#0b5218" stroke-width="5" stroke-linejoin="round"/><path d="M1631 588 C1645 570, 1660 556, 1670 554 C1678 556, 1678 568, 1677 578 Z" fill="#ee3a0c" stroke="#7a0b0b" stroke-width="4" stroke-linejoin="round"/><path d="M1677 578 C1684 568, 1694 562, 1700 563 C1705 566, 1704 574, 1703 580 Z" fill="#ee3a0c" stroke="#7a0b0b" stroke-width="4" stroke-linejoin="round"/><path d="M1587 385 C1601 391, 1621 399, 1621 415 C1621 428, 1608 436, 1594 434 Z" fill="#ee3a0c" stroke="#7a0b0b" stroke-width="6" stroke-linejoin="round"/><path d="M1597 442 C1611 448, 1631 462, 1631 478 C1631 491, 1623 496, 1609 494 Z" fill="#ee3a0c" stroke="#7a0b0b" stroke-width="6" stroke-linejoin="round"/><path d="M1610 501 C1624 507, 1633 512, 1633 528 C1633 541, 1631 546, 1617 544 Z" fill="#ee3a0c" stroke="#7a0b0b" stroke-width="6" stroke-linejoin="round"/><path d="M1500 380 L1587 418 C1600 480, 1614 545, 1620 600 C1625 650, 1629 700, 1629 742.3 L1366 638.4 L1366 560 Z" fill="#8de800"/><path d="M1587 418 C1600 480, 1614 545, 1620 600 C1625 650, 1629 700, 1629 744.3" fill="none" stroke="#0b5218" stroke-width="6.5" stroke-linecap="round"/><g clip-path="url(#cTop)"><rect x="1368" y="560" width="118" height="110" fill="#f2f67a"/><ellipse cx="1424" cy="575" rx="52" ry="52" fill="#ffd300"/></g><path d="M1368 566 L1366 638.4" stroke="#f0420e" stroke-width="5"/><path d="M1176 563.4 L1694 768.0" stroke="#6b3915" stroke-width="5"/><path d="M1318 548 C1295 558, 1276 575, 1266 598 L1300 622 C1320 625, 1345 618, 1367 611 L1367 560 Z" fill="#63bd0a"/><path d="M1318 548 C1295 558, 1276 575, 1266 598 M1335 620 C1345 618, 1355 615, 1364 612 M1339 614 L1348 607" fill="none" stroke="#0b5218" stroke-width="5" stroke-linecap="round" stroke-linejoin="round"/><circle cx="1372" cy="370.5" r="48" fill="#0b0c10"/><g clip-path="url(#cEye2)"><path d="M1377 325 C1370 340, 1366 360, 1368 380 L1320 390 L1320 320 Z" fill="#ffe600"/><ellipse cx="1392" cy="362" rx="20" ry="32" fill="#6f3c17"/></g><path d="M1145 657 L1238 601 L1538 728.5 L1441 792.6 Z" fill="#978fa7" stroke="#474a63" stroke-width="6" stroke-linejoin="round"/><path d="M1145 657 L1441 792.6 L1441 822.3 L1145 687 Z" fill="#7b7590" stroke="#474a63" stroke-width="6" stroke-linejoin="round"/><path d="M1441 792.6 L1538 728.5 L1538 759.8 L1441 822.3 Z" fill="#aba7bb" stroke="#474a63" stroke-width="6" stroke-linejoin="round"/><path d="M1172.0 650.0 L1172.0 639.0 L1237.6 596.6 L1504.9 716.9 L1504.9 727.9 L1439.3 770.2 Z" fill="#66667f" stroke="#66667f" stroke-width="6" stroke-linejoin="round"/><path d="M1172.0 639.0 L1439.3 759.2 L1439.3 770.2 L1172.0 650.0 Z" fill="#b9b4c7"/><path d="M1439.3 759.2 L1504.9 716.9 L1504.9 727.9 L1439.3 770.2 Z" fill="#f1f0f6"/><path d="M1172.0 639.0 L1439.3 759.2 L1504.9 716.9 L1237.6 596.6 Z" fill="#dcd8e6"/><path d="M1192.6 659.2 L1192.6 648.2 L1258.2 605.9 M1213.1 668.5 L1213.1 657.5 L1278.7 615.1 M1233.7 677.8 L1233.7 666.8 L1299.3 624.4 M1254.2 687.0 L1254.2 676.0 L1319.8 633.6 M1274.8 696.2 L1274.8 685.2 L1340.4 642.9 M1295.4 705.5 L1295.4 694.5 L1361.0 652.1 M1315.9 714.8 L1315.9 703.8 L1381.5 661.4 M1336.5 724.0 L1336.5 713.0 L1402.1 670.6 M1357.0 733.2 L1357.0 722.2 L1422.6 679.9 M1377.6 742.5 L1377.6 731.5 L1443.2 689.1 M1398.2 751.8 L1398.2 740.8 L1463.8 698.4 M1418.7 761.0 L1418.7 750.0 L1484.3 707.6 M1188.4 628.4 L1455.7 748.6 L1455.7 759.6 M1204.8 617.8 L1472.1 738.0 L1472.1 749.0 M1221.2 607.2 L1488.5 727.5 L1488.5 738.5" fill="none" stroke="#66667f" stroke-width="3.5"/><path d="M1172.0 650.0 L1172.0 639.0 L1237.6 596.6 L1504.9 716.9 L1504.9 727.9 L1439.3 770.2 Z" fill="none" stroke="#66667f" stroke-width="5" stroke-linejoin="round"/><path d="M1252 617 L1287 611 L1273 634 L1306 619 L1297 643 L1335 620 C1338 604, 1310 596, 1292 597 C1275 599, 1260 607, 1252 617 Z" fill="#ffffff" stroke="#0e6b5b" stroke-width="5" stroke-linejoin="round"/><path d="M1287 611 L1297 599 M1306 619 L1318 603" stroke="#0e6b5b" stroke-width="4.5" stroke-linecap="round"/><path d="M1254 393 C1300 372, 1370 344, 1412 339 C1450 338, 1490 348, 1515 357 L1545 400 L1488 423 L1410 444 Z" fill="#c2fb5c"/><path d="M1410 444 L1488 423 L1545 400 L1590 420 C1596 470, 1600 500, 1604 540 L1517 529 L1407 575 Z" fill="#8de800"/><path d="M1256 393 L1410 444 L1407 575 L1330 553 C1300 545, 1275 535, 1266 526 C1254 518, 1252 500, 1251 470 C1250 430, 1251 405, 1256 393 Z" fill="#63bd0a"/><path d="M1407 575 L1330 553 C1300 545, 1278 536, 1266 526 C1254 516, 1252 500, 1251 470 C1250 430, 1251 405, 1256 393 C1258 388, 1262 385, 1268 382 C1310 364, 1375 343, 1412 339 C1450 338, 1490 348, 1515 357" fill="none" stroke="#0b5218" stroke-width="5.5" stroke-linecap="round" stroke-linejoin="round"/><path d="M1442 530 C1441 495, 1452 452, 1474 451 C1494 450, 1493 480, 1488 500 L1484 515 Z" fill="#ff9fbd" stroke="#f0420e" stroke-width="5" stroke-linejoin="round"/><path d="M1472 472 L1465 512" stroke="#f0420e" stroke-width="4.5" stroke-linecap="round"/><path d="M1407.5 535 C1430 528, 1470 514, 1487 500 C1495 492, 1499 484, 1504 483 L1520 483 L1520 528 L1409 574 Z" fill="#8de800"/><path d="M1256 476 L1407.5 535 C1430 528, 1470 514, 1487 500 C1495 492, 1499 484, 1504 483 C1510 483, 1513 496, 1518 495 C1524 494, 1527 485, 1525.5 470" fill="none" stroke="#0b5218" stroke-width="5" stroke-linecap="round" stroke-linejoin="round"/><ellipse cx="1291" cy="441" rx="6.5" ry="12" fill="#0b0c10"/><ellipse cx="1364" cy="467" rx="6.5" ry="12" fill="#0b0c10"/><path d="M1407 574 C1440 568, 1480 550, 1517 529" fill="none" stroke="#0b5218" stroke-width="5" stroke-linecap="round"/><path d="M1377 668 L1405 671 L1388 705 L1416 698 L1407 723 L1445 711 C1440 690, 1420 665, 1408 658 C1395 658, 1385 662, 1377 668 Z" fill="#ffffff" stroke="#0e6b5b" stroke-width="5" stroke-linejoin="round"/><path d="M1405 671 L1413 661 M1416 698 L1428 684" stroke="#0e6b5b" stroke-width="4.5" stroke-linecap="round"/><path d="M1527 575 C1500 600, 1450 630, 1408 658 C1408 675, 1412 690, 1425 700 C1432 706, 1440 709, 1446 709 C1480 705, 1545 672, 1582 636 C1600 620, 1600 590, 1527 575 Z" fill="#8de800"/><path d="M1527 575 C1500 600, 1450 630, 1408 658 C1408 675, 1412 690, 1425 700 C1432 706, 1440 709, 1446 709 C1480 705, 1545 672, 1582 636" fill="none" stroke="#0b5218" stroke-width="5.5" stroke-linecap="round" stroke-linejoin="round"/><ellipse cx="1527" cy="656" rx="14" ry="8" fill="#63bd0a" transform="rotate(-20 1527 656)"/><ellipse cx="1498" cy="662" rx="7" ry="4.5" fill="#63bd0a" transform="rotate(-20 1498 662)"/><ellipse cx="1606" cy="719" rx="9" ry="13" fill="#63bd0a"/><ellipse cx="1541" cy="411" rx="52" ry="49" fill="#63bd0a" clip-path="url(#cShadow)"/><circle cx="1538.4" cy="402.4" r="52" fill="#0b0c10"/><g clip-path="url(#cEye)"><path d="M1541 356 C1528 380, 1528 425, 1541 449 L1480 460 L1480 345 Z" fill="#ffe600"/><ellipse cx="1549.5" cy="392.5" rx="19.5" ry="32" fill="#6f3c17"/></g><path d="M1516 393.5 L1546 390.5" stroke="#ffffff" stroke-width="15" stroke-linecap="round"/></svg><div class="a" style="left:1155px;top:1090px;width:572px;height:64px;background:#21262d;border-radius:24px;"></div>
<div class="t" style="left:1185.7px;top:1112.4px;font-size:23px;color:#a3a9b3;">1s</div>
<div class="t" style="left:1220.7px;top:1112.4px;font-size:23px;color:#a3a9b3;">00f</div>
<svg style="left:1322px;top:1108px" width="30" height="28" viewBox="0 0 30 28"><rect x="4" y="2.5" width="2.2" height="23" rx="1" fill="#8c9aa5"/><path d="M25.5 4.5 V23.5 a1.5 1.5 0 0 1 -2.3 1.2 L10 15.2 a1.5 1.5 0 0 1 0 -2.4 L23.2 3.3 a1.5 1.5 0 0 1 2.3 1.2Z" fill="#8c9aa5"/></svg>
<svg style="left:1376px;top:1108px" width="30" height="28" viewBox="0 0 30 28"><path d="M19 4.5 V23.5 a1.5 1.5 0 0 1 -2.3 1.2 L4 15.2 a1.5 1.5 0 0 1 0 -2.4 L16.7 3.3 a1.5 1.5 0 0 1 2.3 1.2Z" fill="#8c9aa5"/><rect x="24" y="2.5" width="2.2" height="23" rx="1" fill="#8c9aa5"/></svg>
<div class="a" style="left:1432px;top:1110px;width:8px;height:24px;background:#ffffff;border-radius:2.5px;"></div>
<div class="a" style="left:1446px;top:1110px;width:8px;height:24px;background:#ffffff;border-radius:2.5px;"></div>
<svg style="left:1480px;top:1108px" width="30" height="28" viewBox="0 0 30 28"><rect x="3.5" y="2.5" width="2.2" height="23" rx="1" fill="#8c9aa5"/><path d="M11 4.5 V23.5 a1.5 1.5 0 0 0 2.3 1.2 L26 15.2 a1.5 1.5 0 0 0 0 -2.4 L13.3 3.3 a1.5 1.5 0 0 0 -2.3 1.2Z" fill="#8c9aa5"/></svg>
<svg style="left:1532px;top:1108px" width="30" height="28" viewBox="0 0 30 28"><path d="M4.5 4.5 V23.5 a1.5 1.5 0 0 0 2.3 1.2 L20 15.2 a1.5 1.5 0 0 0 0 -2.4 L6.8 3.3 a1.5 1.5 0 0 0 -2.3 1.2Z" fill="#8c9aa5"/><rect x="24" y="2.5" width="2.2" height="23" rx="1" fill="#8c9aa5"/></svg>
<svg style="left:1584px;top:1108px" width="30" height="28" viewBox="0 0 30 28"><g fill="none" stroke="#00bfa5" stroke-width="2.4" stroke-linecap="round" stroke-linejoin="round"><path d="M4 13 V9.5 a1.5 1.5 0 0 1 1.5 -1.5 H24"/><path d="M20 3.5 L24.5 8 L20 12.5"/><path d="M26 15 V18.5 a1.5 1.5 0 0 1 -1.5 1.5 H6"/><path d="M10 15.5 L5.5 20 L10 24.5"/></g></svg>
<svg style="left:1664px;top:1110px" width="30" height="26" viewBox="0 0 30 26"><rect x="2.5" y="2" width="25" height="20" rx="3" fill="none" stroke="#8c9aa5" stroke-width="2.2"/><path d="M12.5 8 L18.5 12 L12.5 16 Z" fill="#8c9aa5"/></svg>
<div class="a" style="left:0;top:1140px;width:2880px;height:30px;background:linear-gradient(rgba(0,0,0,0),rgba(0,0,0,0.10) 50%,rgba(0,0,0,0.32))"></div>
<div class="a" style="left:0;top:1170px;width:2880px;height:528px;background:#21262d;border-radius:26px 26px 0 0;box-shadow:0 -3px 16px rgba(0,0,0,0.38)"></div>
<div class="a" style="left:0px;top:1226px;width:2880px;height:472px;background:#2a3038;border-radius:0px;"></div>
<svg style="left:52px;top:1174px" width="286" height="52" viewBox="0 0 286 52"><path d="M0 52 C18 52 28 42 28 24 V14 A14 14 0 0 1 42 0 H244 A14 14 0 0 1 258 14 V24 C258 42 268 52 286 52 Z" fill="#2a3038"/></svg>
<svg style="left:33px;top:1197px" width="15" height="9" viewBox="0 0 15 9"><path d="M0 0 H14.5 L7.25 9 Z" fill="#0c0e10"/></svg>
<svg style="left:114px;top:1186px" width="28" height="28" viewBox="0 0 28 28"><g stroke="#4a7cf5" stroke-width="2.4" fill="none"><path d="M6 0.5 V26.5 M21.5 0.5 V26.5 M0.5 6 H27 M0.5 21.5 H27"/></g></svg>
<div class="t" style="left:151.7px;top:1190.4px;font-size:23px;color:#ffffff;font-weight:bold;letter-spacing:0.2px;">Main scene</div>
<div class="t" style="left:79.7px;top:1241.4px;font-size:23px;color:#b4b8c0;font-weight:bold;letter-spacing:-0.2px;">Layers</div>
<div class="a" style="left:80px;top:1268px;width:599px;height:48px;background:#111417;border-radius:8px;"></div>
<svg style="left:91px;top:1285px" width="12" height="16" viewBox="0 0 12 16"><path d="M1 0.6 L9.2 7.5 L1 14.4 Z" fill="#8e9ba5"/></svg>
<div class="a" style="left:112px;top:1276px;width:32px;height:32px;background:#21262d;border-radius:6px;"></div>
<svg style="left:112px;top:1276px" width="32" height="32" viewBox="0 0 32 32"><g fill="#5a1ee8"><rect x="11" y="14.3" width="10" height="3"/><rect x="14.6" y="11" width="2.8" height="10"/></g><g stroke="#4a7cf5" stroke-width="1.5" fill="none"><path d="M10.6 7.2 V24.8 M21.4 7.2 V24.8 M7.2 10.3 H24.8 M7.2 21.4 H24.8"/></g></svg>
<div class="t" style="left:151.7px;top:1283.8px;font-size:21.5px;color:#eceef1;letter-spacing:1.1px;">Dragon</div>
<svg style="left:640px;top:1280px" width="40" height="24" viewBox="0 0 40 24"><circle cx="27" cy="12" r="6" fill="#646482"/><circle cx="20" cy="12" r="6.6" fill="#646482" stroke="#111417" stroke-width="1.3"/><circle cx="12.8" cy="12" r="6.6" fill="#646482" stroke="#111417" stroke-width="1.3"/></svg>
<div class="a" style="left:682px;top:1234px;width:2174px;height:32px;background:#22272e;border-radius:8px;"></div>
<div class="a" style="left:682px;top:1268px;width:2174px;height:48px;background:#22272e;border-radius:0px;"></div>
<div class="a" style="left:698px;top:1272px;width:2142px;height:40px;background:#8a98a2;border-radius:8px;"></div>
<div class="t" style="left:688.2px;top:1242.2px;font-size:15.5px;color:#b9bdc5;letter-spacing:0.2px;">0s</div>
<div class="t" style="left:896.8px;top:1242.2px;font-size:15.5px;color:#b9bdc5;letter-spacing:0.2px;">0.5s</div>
<div class="t" style="left:1119.2px;top:1242.2px;font-size:15.5px;color:#b9bdc5;letter-spacing:0.2px;">1s</div>
<div class="t" style="left:1327.2px;top:1242.2px;font-size:15.5px;color:#b9bdc5;letter-spacing:0.2px;">1.5s</div>
<div class="t" style="left:1546.2px;top:1242.2px;font-size:15.5px;color:#b9bdc5;letter-spacing:0.2px;">2s</div>
<div class="t" style="left:1754.2px;top:1242.2px;font-size:15.5px;color:#b9bdc5;letter-spacing:0.2px;">2.5s</div>
<div class="t" style="left:1975.2px;top:1242.2px;font-size:15.5px;color:#b9bdc5;letter-spacing:0.2px;">3s</div>
<div class="t" style="left:2183.2px;top:1242.2px;font-size:15.5px;color:#b9bdc5;letter-spacing:0.2px;">3.5s</div>
<div class="t" style="left:2403.6px;top:1242.2px;font-size:15.5px;color:#b9bdc5;letter-spacing:0.2px;">4s</div>
<div class="t" style="left:2612.2px;top:1242.2px;font-size:15.5px;color:#b9bdc5;letter-spacing:0.2px;">4.5s</div>
<div class="t" style="left:2834.2px;top:1242.2px;font-size:15.5px;color:#b9bdc5;letter-spacing:0.2px;">5s</div>
<div class="a" style="left:1126px;top:1270px;width:4px;height:428px;background:#c9510c;border-radius:0px;"></div>
<svg style="left:1117px;top:1259px" width="22" height="14" viewBox="0 0 22 14"><path d="M2 1.5 H20 L11 11.5 Z" fill="#c9510c" stroke="#c9510c" stroke-width="1.5" stroke-linejoin="round"/></svg>
</body></html>
